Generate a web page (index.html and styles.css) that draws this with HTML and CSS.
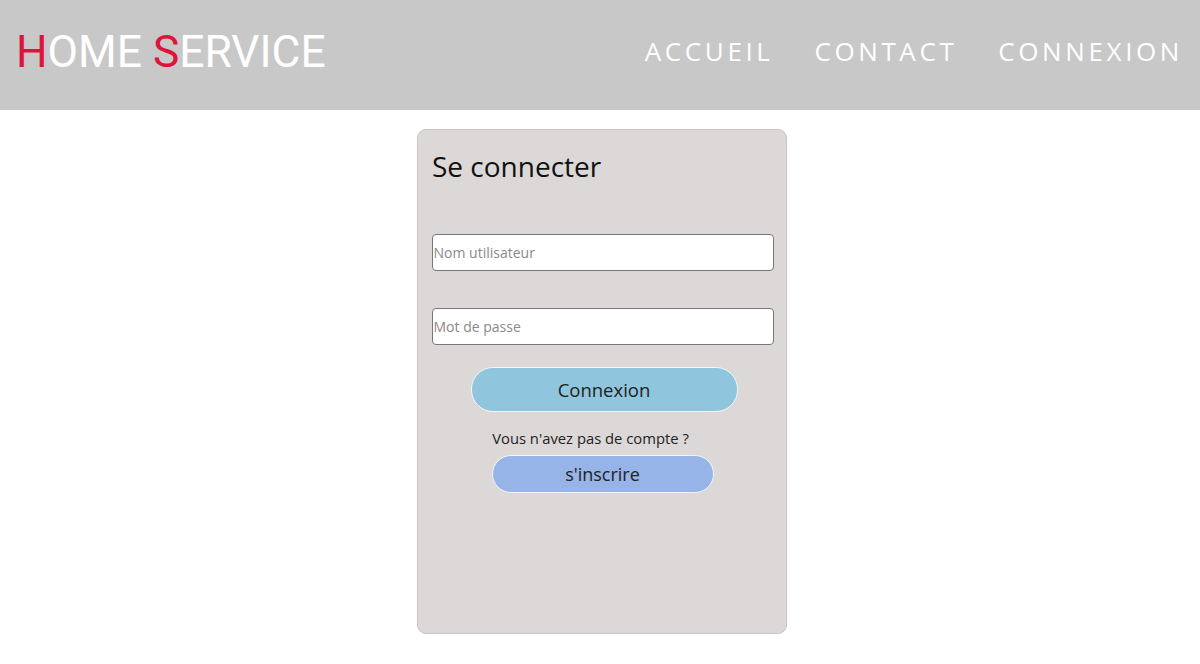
FILE: index.html
```html
<!DOCTYPE html>
<html lang="fr">
<head>
<meta charset="utf-8">
<title>Home Service</title>
<link rel="stylesheet" href="styles.css">
</head>
<body>
<header class="topbar">
  <div class="logo"><span class="red">H</span>OME <span class="red">S</span>ERVICE</div>
  <nav class="nav">
    <a href="#">Accueil</a>
    <a href="#">Contact</a>
    <a href="#">Connexion</a>
  </nav>
</header>
<main class="main">
  <form class="card">
    <h1 class="title">Se connecter</h1>
    <input class="field first" type="text" placeholder="Nom utilisateur">
    <input class="field second" type="password" placeholder="Mot de passe">
    <button class="btn btn-login" type="button">Connexion</button>
    <p class="note">Vous n'avez pas de compte ?</p>
    <button class="btn btn-signup" type="button">s'inscrire</button>
  </form>
</main>
</body>
</html>
```
FILE: styles.css
```css
html, body {
  margin: 0;
  padding: 0;
  background: #ffffff;
  font-family: "Open Sans", sans-serif;
}
.topbar {
  height: 110px;
  background: #c8c8c8;
  display: flex;
  align-items: center;
  justify-content: space-between;
  padding: 0 17px 8px 16px;
  box-sizing: border-box;
}
.logo {
  font-family: Roboto, sans-serif;
  font-size: 44.3px;
  color: #ffffff;
  letter-spacing: 0;
  margin-top: 2px;
}
.red { color: #dc143c; }
.nav {
  display: flex;
  gap: 41px;
  margin-top: -1px;
}
.nav a {
  color: #ffffff;
  text-decoration: none;
  text-transform: uppercase;
  font-size: 26px;
  letter-spacing: 3.6px;
}
.main {
  display: flex;
  justify-content: center;
  padding-top: 19px;
  padding-left: 4px;
}
.card {
  width: 370px;
  height: 505px;
  box-sizing: border-box;
  background: #ddd8d8;
  border: 1px solid #c9c5c5;
  border-radius: 9px;
  padding: 0 13px 0 14px;
  display: flex;
  flex-direction: column;
  align-items: center;
}
.title {
  align-self: flex-start;
  margin: 18px 0 0 0;
  font-weight: 400;
  font-size: 28px;
  line-height: 36px;
  color: #111;
}
.field {
  width: 342px;
  height: 37px;
  box-sizing: border-box;
  border: 1px solid #777;
  border-radius: 4px;
  background: #fff;
  padding: 0 1px;
  font-family: "Open Sans", sans-serif;
  font-size: 14px;
  outline: none;
}
.field::placeholder { color: #8a8a8a; }
.first { margin-top: 50px; }
.second { margin-top: 37px; }
.btn {
  font-family: "Open Sans", sans-serif;
  font-size: 18.5px;
  color: #222;
  border: 1px solid #f4f4f4;
  box-sizing: border-box;
  padding: 0;
}
.btn-login {
  margin-top: 22px;
  width: 267px;
  height: 45px;
  border-radius: 22px;
  background: #8fc5dd;
  margin-left: 3px;
}
.note {
  margin: 16px 24px 7px 0;
  font-size: 14.8px;
  line-height: 20px;
  color: #222;
}
.btn-signup {
  margin-top: 0;
  width: 222px;
  height: 38px;
  border-radius: 19px;
  background: #96b4e8;
  font-size: 18px;
}
```
